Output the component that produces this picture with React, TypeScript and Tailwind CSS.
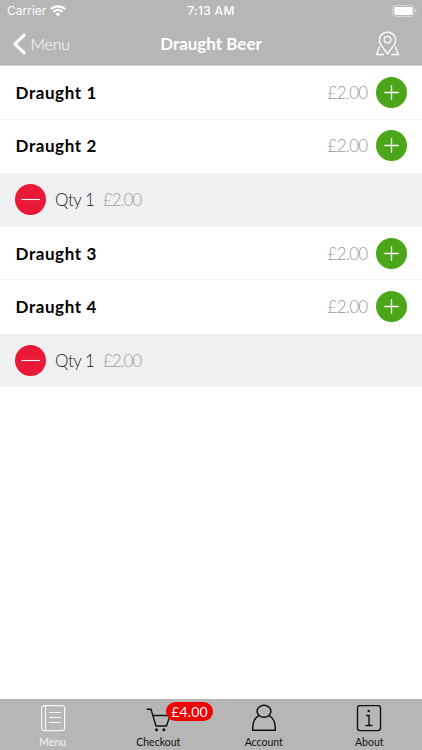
import type { ReactNode } from "react";

function ProductRow({ name, divider = false }: { name: string; divider?: boolean }) {
  return (
    <div className={`flex h-[53.5px] items-center pl-[15.5px] pr-[15px] ${divider ? "border-b border-[#f1f1f2] pt-px" : "pb-px"}`}>
      <span className="grow text-[17px] font-bold tracking-[0.6px] text-black">{name}</span>
      <span className="mr-[8.5px] text-[17px] font-light tracking-[-0.7px] text-[#999]">£2.00</span>
      <button aria-label="Add" className="flex size-[31px] items-center justify-center rounded-full bg-[#4ba619]">
        <svg width="31" height="31" viewBox="0 0 31 31" stroke="white" strokeWidth="1.3">
          <path d="M8.3 15.5h14.5M15.5 8.3v14.5" />
        </svg>
      </button>
    </div>
  );
}

function QuantityRow() {
  return (
    <div className="flex h-[53.5px] items-center bg-[#eff0f2] pl-[15px]">
      <button aria-label="Remove" className="flex size-[31px] items-center justify-center rounded-full bg-[#e91937]">
        <svg width="31" height="31" viewBox="0 0 31 31" stroke="white" strokeWidth="1.1">
          <path d="M6.5 15.5h18.5" />
        </svg>
      </button>
      <span className="ml-[9px] w-[48px] text-[17px] font-light tracking-[-0.5px] text-[#222]">Qty 1</span>
      <span className="text-[17px] font-light tracking-[-1.1px] text-[#a0a0a0]">£2.00</span>
    </div>
  );
}

function Tab({ label, light = false, children }: { label: string; light?: boolean; children: ReactNode }) {
  return (
    <div className={`flex flex-1 flex-col items-center ${light ? "text-[#f4f4f4]" : "text-[#111]"}`}>
      <svg className="mt-[3px]" width="32" height="32" viewBox="0 0 32 32" fill="none" stroke="currentColor" strokeWidth="1.2">
        {children}
      </svg>
      <span className="mt-px text-[10.5px] leading-[14px]">{label}</span>
    </div>
  );
}

export default function App() {
  return (
    <div className="flex h-[750px] w-[422px] flex-col overflow-hidden bg-white font-['Lato',sans-serif]">
      <header className="h-[66px] shrink-0 border-b border-[#d7d7d7] bg-[#b6b6b6] text-white">
        <div className="grid h-[22px] grid-cols-3 items-center font-['Inter',sans-serif] text-[12px] leading-[22px]">
          <div className="flex items-center gap-[4px] pl-[7px]">
            <span>Carrier</span>
            <svg width="16" height="12" viewBox="0 0 15 11" fill="none" stroke="white">
              <path d="M.8 3.8a9.7 9.7 0 0 1 13.4 0" strokeWidth="2" />
              <path d="M3.2 6.3a6.2 6.2 0 0 1 8.6 0" strokeWidth="1.8" />
              <path d="M5.2 8.3q2.3-1.8 4.6 0L7.5 10.7z" fill="white" stroke="none" />
            </svg>
          </div>
          <span className="text-center font-medium tracking-[0.3px]">7:13 AM</span>
          <svg className="mr-[4px] justify-self-end" width="26" height="12" viewBox="0 0 26 12">
            <rect x=".7" y=".6" width="21.5" height="10.8" rx="3" fill="none" stroke="#d8d8d8" />
            <rect x="2.2" y="2.1" width="18.5" height="7.8" rx="1.7" fill="white" />
            <path d="M23.4 4v4q2-2 0-4z" fill="#ddd" />
          </svg>
        </div>
        <div className="grid h-[43px] grid-cols-3 items-center">
          <div className="flex items-center pl-[12.5px]">
            <svg width="14" height="22" viewBox="0 0 14 22" fill="none" stroke="white" strokeWidth="3">
              <path d="M12 1.3 2 11l10 9.7" />
            </svg>
            <span className="ml-[4px] text-[16px] font-light tracking-[-0.2px]">Menu</span>
          </div>
          <h1 className="whitespace-nowrap text-center text-[17px] font-bold">Draught Beer</h1>
          <svg className="mr-[22px] justify-self-end" width="25" height="25" viewBox="0 0 25 25" fill="none" stroke="white" strokeWidth="1.35">
            <path d="M12.5 23 5.8 13.7C2.5 8.2 5.5 1.2 12.5 1.2S22.5 8.2 19.2 13.7z" />
            <circle cx="12.5" cy="8.6" r="3.3" />
            <path d="M4.5 15.5 1.7 23.5H9M20.5 15.5 23.3 23.5H16" />
          </svg>
        </div>
      </header>
      <main className="grow">
        <ProductRow name="Draught 1" divider />
        <ProductRow name="Draught 2" />
        <QuantityRow />
        <ProductRow name="Draught 3" divider />
        <ProductRow name="Draught 4" />
        <QuantityRow />
      </main>
      <nav className="relative flex h-[51px] shrink-0 bg-[#b6b6b6]">
        <Tab label="Menu" light>
          <rect x="4.6" y="3.6" width="23" height="25" rx="2.5" />
          <path d="M8.5 4v24M12 10.5h12M12 15.5h12M12 20.5h12" />
        </Tab>
        <Tab label="Checkout">
          <path d="M4.7 7.3H9l5 16.7h10.5l3.5-10.5H11" strokeWidth="1.4" />
          <circle cx="14.5" cy="27.7" r="1.5" fill="currentColor" stroke="none" />
          <circle cx="21.9" cy="27.7" r="1.5" fill="currentColor" stroke="none" />
        </Tab>
        <Tab label="Account">
          <ellipse cx="16" cy="9.3" rx="6.9" ry="6" strokeWidth="1.5" />
          <path d="M11 13.7C6.5 16 4.7 19.5 4.7 28.3h22.6c0-8.800-1.800-12.300-6.300-14.600" strokeWidth="1.5" />
        </Tab>
        <Tab label="About">
          <rect x="4.500" y="3.600" width="23" height="25" rx="2.500" strokeWidth="1.400" />
          <path d="M13 13.500h3v9.500M12.500 23.500h7" strokeWidth="1.400" />
          <circle cx="15.700" cy="9" r="1.200" fill="currentColor" stroke="none" />
        </Tab>
        <span className="absolute left-[166px] top-[3px] flex h-[19px] w-[47px] items-center justify-center rounded-full bg-[#f20000] text-[14px] tracking-[0.1px] text-white">£4.00</span>
      </nav>
    </div>
  );
}
